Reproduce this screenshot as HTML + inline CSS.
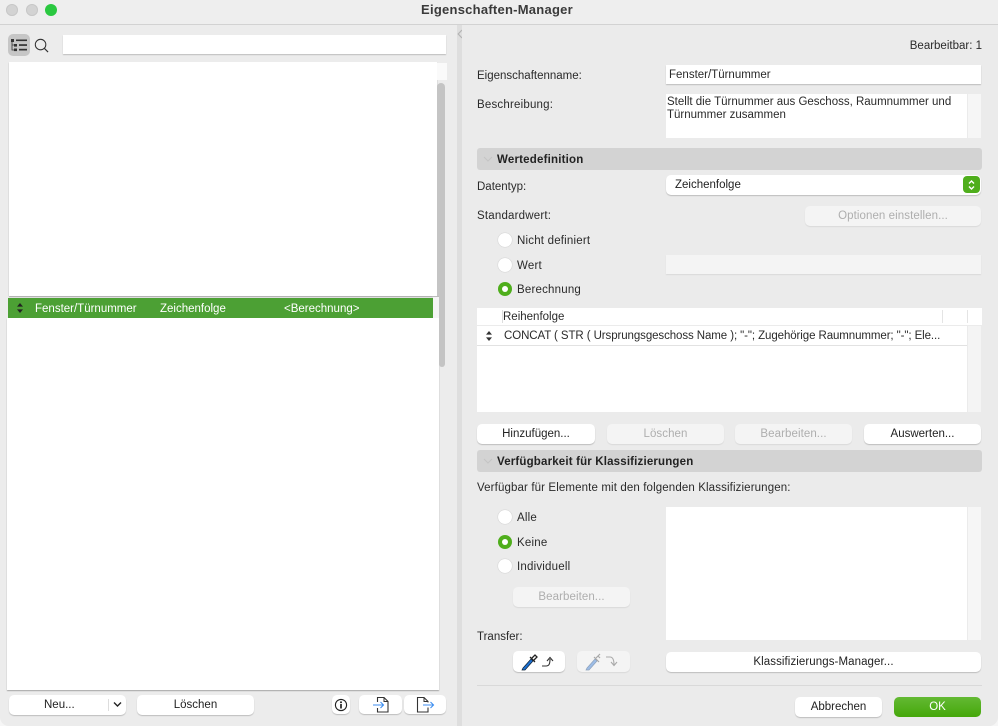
<!DOCTYPE html>
<html lang="de"><head><meta charset="utf-8"><title>Eigenschaften-Manager</title>
<style>
html,body{margin:0;padding:0;width:998px;height:726px;overflow:hidden;background:#f6f6f6}
#w{position:absolute;left:0;top:0;width:998px;height:726px;background:#ececec;border-radius:0 0 9px 9px;overflow:hidden;font:11.5px/14px "Liberation Sans",sans-serif;color:#2a2a2a;filter:blur(.3px)}
#w div,#w svg{position:absolute}
.l{white-space:nowrap}
.w{letter-spacing:.2px}
.b{background:#fff;border-radius:5px;box-shadow:0 1px 1px rgba(0,0,0,.2);text-align:center;line-height:21px;color:#222}
.d{background:#f4f4f4;border-radius:5px;box-shadow:0 1px 1px rgba(0,0,0,.08);text-align:center;line-height:21px;color:#aeaeae;letter-spacing:.08px}
.s{left:477px;width:505px;height:22px;background:#d3d3d3;border-radius:3px}
.s b{position:absolute;left:20px;top:5px;color:#222;white-space:nowrap;letter-spacing:.2px}
.r{width:14px;height:14px;left:498px;border-radius:50%;background:#fff;box-shadow:0 0 1px rgba(0,0,0,.3)}
.r.on{background:#4fae1c;box-shadow:none}
.r.on:after{content:"";position:absolute;left:4px;top:4px;width:6px;height:6px;border-radius:50%;background:#fff}
.i{background:#fff;box-shadow:0 1px 1px rgba(0,0,0,.2)}
</style></head><body><div id="w">

<!-- title bar -->
<div style="left:0;top:0;width:998px;height:24px;background:#eeeeee;border-bottom:1px solid #d2d2d2"></div>
<div style="left:6px;top:4px;width:12px;height:12px;border-radius:50%;background:#d3d3d3;box-shadow:inset 0 0 0 1px #c8c8c8"></div>
<div style="left:26px;top:4px;width:12px;height:12px;border-radius:50%;background:#d3d3d3;box-shadow:inset 0 0 0 1px #c8c8c8"></div>
<div style="left:45px;top:4px;width:12px;height:12px;border-radius:50%;background:#2ac840"></div>
<div class="l" style="left:-2px;width:998px;top:2px;text-align:center;font-weight:bold;font-size:13px;line-height:16px;color:#3a3a3a;letter-spacing:.25px">Eigenschaften-Manager</div>

<!-- splitter -->
<div style="left:457px;top:25px;width:5px;height:701px;background:#dedede"></div>
<svg style="left:457px;top:29px" width="6" height="10" viewBox="0 0 6 10"><path d="M5 1 1.2 5 5 9" fill="none" stroke="#b4b4b4" stroke-width="1.2"/></svg>
<div style="left:462px;top:25px;width:536px;height:701px;background:#ebebeb"></div>

<!-- left toolbar -->
<div style="left:8px;top:34px;width:22px;height:22px;border-radius:5px;background:#c6c6c6"></div>
<svg style="left:10px;top:38px" width="18" height="15" viewBox="0 0 18 15"><g fill="#333"><rect x="1" y="1" width="3" height="3"/><rect x="6" y="1.5" width="11" height="1.6"/><rect x="4" y="6" width="3" height="2.6"/><rect x="9" y="6.2" width="8" height="1.7"/><rect x="4" y="10.5" width="3" height="2.6"/><rect x="9" y="10.8" width="8" height="1.7"/></g><path d="M2 4v8h2M2 7h2" stroke="#333" stroke-width=".8" fill="none"/></svg>
<svg style="left:34px;top:38px" width="15" height="15" viewBox="0 0 16 16"><circle cx="7" cy="7" r="5.6" fill="none" stroke="#333" stroke-width="1.1"/><path d="M11 11 15 15" stroke="#333" stroke-width="1.2"/></svg>
<div class="i" style="left:63px;top:35px;width:383px;height:19px"></div>

<!-- left lists -->
<div style="left:9px;top:62px;width:428px;height:234px;background:#fff;box-shadow:0 1px 1px rgba(0,0,0,.3)"></div>
<div style="left:437px;top:63px;width:10px;height:17px;background:#fafafa"></div>
<div style="left:437px;top:83px;width:8px;height:214px;background:#c4c4c4;border-radius:4px 4px 0 0"></div>
<div style="left:8px;top:298px;width:425px;height:20px;background:#4ca034"></div>
<div style="left:433px;top:297px;width:6px;height:21px;background:#f4f4f4"></div>
<div style="left:7px;top:318px;width:432px;height:372px;background:#fff;box-shadow:0 1px 1px rgba(0,0,0,.3)"></div>
<div style="left:439px;top:297px;width:6px;height:70px;background:#c4c4c4;border-radius:0 0 3px 3px"></div>
<div style="left:432px;top:296px;width:7px;height:1px;background:#bbb"></div>
<svg style="left:16px;top:303px" width="8" height="10" viewBox="0 0 8 10"><path d="M4 0 7 3.6H1zM4 10 1 6.4h6z" fill="#222"/></svg>
<div class="l" style="left:35px;top:302px;color:#fff">Fenster/Türnummer</div>
<div class="l" style="left:160px;top:302px;color:#fff">Zeichenfolge</div>
<div class="l" style="left:284px;top:302px;color:#fff">&lt;Berechnung&gt;</div>

<!-- left bottom buttons -->
<div class="b" style="left:9px;top:695px;width:117px;height:20px;text-align:left"><div class="l" style="left:35px;top:0;line-height:20px">Neu...</div></div>
<div style="left:108px;top:699px;width:1px;height:12px;background:#ddd"></div>
<svg style="left:113px;top:701px" width="9" height="7" viewBox="0 0 9 7"><path d="M1 1.5 4.5 5 8 1.5" fill="none" stroke="#222" stroke-width="1.4"/></svg>
<div class="b" style="left:137px;top:695px;width:117px;height:20px">Löschen</div>
<div class="b" style="left:332px;top:695px;width:18px;height:19px"></div>
<svg style="left:334px;top:698px" width="14" height="14" viewBox="0 0 14 14"><circle cx="7" cy="7" r="5.6" fill="none" stroke="#222" stroke-width="1.1"/><circle cx="7" cy="4.3" r="1" fill="#222"/><path d="M7 6v4.5" stroke="#222" stroke-width="1.7"/></svg>
<div class="b" style="left:359px;top:695px;width:43px;height:19px"></div>
<svg style="left:372px;top:695px" width="18" height="19" viewBox="0 0 18 19"><path d="M5.500 7V2.500H12L16 6.500V17H5.500V13" fill="none" stroke="#333" stroke-width="1.100"/><path d="M12 2.500V6.500H16" fill="none" stroke="#333" stroke-width="1"/><path d="M1 10H11.500M8.500 7 11.500 10 8.500 13" fill="none" stroke="#3d8ef0" stroke-width="1.100"/></svg>
<div class="b" style="left:404px;top:695px;width:42px;height:19px"></div>
<svg style="left:416px;top:695px" width="19" height="19" viewBox="0 0 19 19"><path d="M12 7.500V6.500L8 2.500H1.500V17H12V12.500" fill="none" stroke="#333" stroke-width="1.100"/><path d="M8 2.500V6.500H12" fill="none" stroke="#333" stroke-width="1"/><path d="M7 10H17.500M14.500 7 17.500 10 14.500 13" fill="none" stroke="#3d8ef0" stroke-width="1.100"/></svg>

<!-- right top -->
<div class="l" style="right:16px;top:39px">Bearbeitbar: 1</div>
<div class="l" style="left:477px;top:69px">Eigenschaftenname:</div>
<div class="i" style="left:666px;top:65px;width:315px;height:19px"></div>
<div class="l" style="left:669px;top:68px">Fenster/Türnummer</div>
<div class="l w" style="left:477px;top:98px">Beschreibung:</div>
<div style="left:666px;top:94px;width:301px;height:44px;background:#fff"></div>
<div style="left:968px;top:94px;width:13px;height:44px;background:#f6f6f6"></div>
<div class="l" style="left:667px;top:96px;line-height:13px">Stellt die Türnummer aus Geschoss, Raumnummer und<br>Türnummer zusammen</div>

<!-- Wertedefinition -->
<div class="s" style="top:148px"><b>Wertedefinition</b></div>
<svg style="left:483px;top:156px" width="10" height="7" viewBox="0 0 10 7"><path d="M1 1 5 5 9 1" fill="none" stroke="#c4c4c4" stroke-width="1"/></svg>
<div class="l" style="left:477px;top:180px">Datentyp:</div>
<div class="b" style="left:666px;top:175px;width:315px;height:20px;text-align:left"><div class="l" style="left:9px;top:3px;line-height:14px">Zeichenfolge</div></div>
<div style="left:963px;top:176px;width:17px;height:17px;border-radius:4px;background:#4fae1c"></div>
<svg style="left:966px;top:179px" width="11" height="12" viewBox="0 0 11 12"><path d="M3 4.500 5.500 2 8 4.500M3 7.500 5.500 10 8 7.500" fill="none" stroke="#fff" stroke-width="1.400"/></svg>
<div class="l w" style="left:477px;top:209px">Standardwert:</div>
<div class="d" style="left:805px;top:206px;width:176px;height:20px">Optionen einstellen...</div>
<div class="r" style="top:233px"></div><div class="l w" style="left:517px;top:234px">Nicht definiert</div>
<div class="r" style="top:258px"></div><div class="l w" style="left:517px;top:259px">Wert</div>
<div style="left:666px;top:255px;width:315px;height:19px;background:#f4f4f4;box-shadow:0 1px 1px rgba(0,0,0,.08)"></div>
<div class="r on" style="top:282px"></div><div class="l w" style="left:517px;top:283px">Berechnung</div>

<!-- formula table -->
<div style="left:477px;top:308px;width:505px;height:17px;background:#fff"></div>
<div style="left:502px;top:310px;width:1px;height:13px;background:#ddd"></div>
<div style="left:942px;top:310px;width:1px;height:13px;background:#e4e4e4"></div>
<div style="left:967px;top:310px;width:1px;height:13px;background:#e4e4e4"></div>
<div class="l" style="left:503px;top:310px">Reihenfolge</div>
<div style="left:477px;top:326px;width:490px;height:86px;background:#fff"></div>
<div style="left:477px;top:345px;width:490px;height:1px;background:#e2e2e2"></div>
<div style="left:968px;top:326px;width:13px;height:86px;background:#f4f4f4"></div>
<svg style="left:485px;top:331px" width="8" height="10" viewBox="0 0 8 10"><path d="M4 0 7 3.600H1zM4 10 1 6.400h6z" fill="#333"/></svg>
<div class="l" style="left:504px;top:329px;letter-spacing:-.09px">CONCAT ( STR ( Ursprungsgeschoss Name ); "-"; Zugehörige Raumnummer; "-"; Ele...</div>

<div class="b" style="left:477px;top:424px;width:118px;height:20px">Hinzufügen...</div>
<div class="d" style="left:607px;top:424px;width:117px;height:20px">Löschen</div>
<div class="d" style="left:735px;top:424px;width:117px;height:20px">Bearbeiten...</div>
<div class="b" style="left:864px;top:424px;width:117px;height:20px">Auswerten...</div>

<!-- Verfügbarkeit -->
<div class="s" style="top:450px"><b style="letter-spacing:.17px">Verfügbarkeit für Klassifizierungen</b></div>
<svg style="left:483px;top:458px" width="10" height="7" viewBox="0 0 10 7"><path d="M1 1 5 5 9 1" fill="none" stroke="#c4c4c4" stroke-width="1"/></svg>
<div class="l" style="left:477px;top:481px;letter-spacing:.125px">Verfügbar für Elemente mit den folgenden Klassifizierungen:</div>
<div class="r" style="top:510px"></div><div class="l w" style="left:517px;top:511px">Alle</div>
<div class="r on" style="top:535px"></div><div class="l w" style="left:517px;top:536px">Keine</div>
<div class="r" style="top:559px"></div><div class="l w" style="left:517px;top:560px">Individuell</div>
<div style="left:666px;top:507px;width:301px;height:133px;background:#fff"></div>
<div style="left:968px;top:507px;width:13px;height:133px;background:#f6f6f6"></div>
<div class="d" style="left:513px;top:587px;width:117px;height:20px">Bearbeiten...</div>

<!-- Transfer -->
<div class="l" style="left:477px;top:630px">Transfer:</div>
<div class="b" style="left:513px;top:651px;width:52px;height:21px"></div>
<svg style="left:520px;top:652px" width="40" height="19" viewBox="0 0 40 19"><path d="M3 16 11 7l2 2-8 9-3 0z" fill="#1c6fd0" stroke="#123" stroke-width=".7"/><path d="M10 5 15 10M12 6l3-3 2 2-3 3" fill="none" stroke="#222" stroke-width="1.300"/><path d="M22 14h4c3 0 4-2 4-7M27 9l3-3.500 3 3.500" fill="none" stroke="#333" stroke-width="1.100"/></svg>
<div class="d" style="left:577px;top:651px;width:53px;height:21px"></div>
<svg style="left:584px;top:652px" width="40" height="19" viewBox="0 0 40 19"><path d="M3 16 11 7l2 2-8 9-3 0z" fill="#9cbce6" stroke="#8fa2bb" stroke-width=".7"/><path d="M10 5 15 10M12 6l4-4M14 4l2 2" fill="none" stroke="#a8a8a8" stroke-width="1.200"/><path d="M22 5h4c3 0 4 3 4 8M27 10l3 3.500 3-3.500" fill="none" stroke="#aaa" stroke-width="1.100"/></svg>
<div class="b" style="left:666px;top:652px;width:315px;height:20px;letter-spacing:.08px">Klassifizierungs-Manager...</div>
<div style="left:477px;top:685px;width:505px;height:1px;background:#d9d9d9"></div>
<div class="b" style="left:795px;top:697px;width:87px;height:20px">Abbrechen</div>
<div style="left:894px;top:697px;width:87px;height:20px;border-radius:5px;background:linear-gradient(#63b933,#45a70a);color:#fff;text-align:center;line-height:21px">OK</div>
</div></body></html>
